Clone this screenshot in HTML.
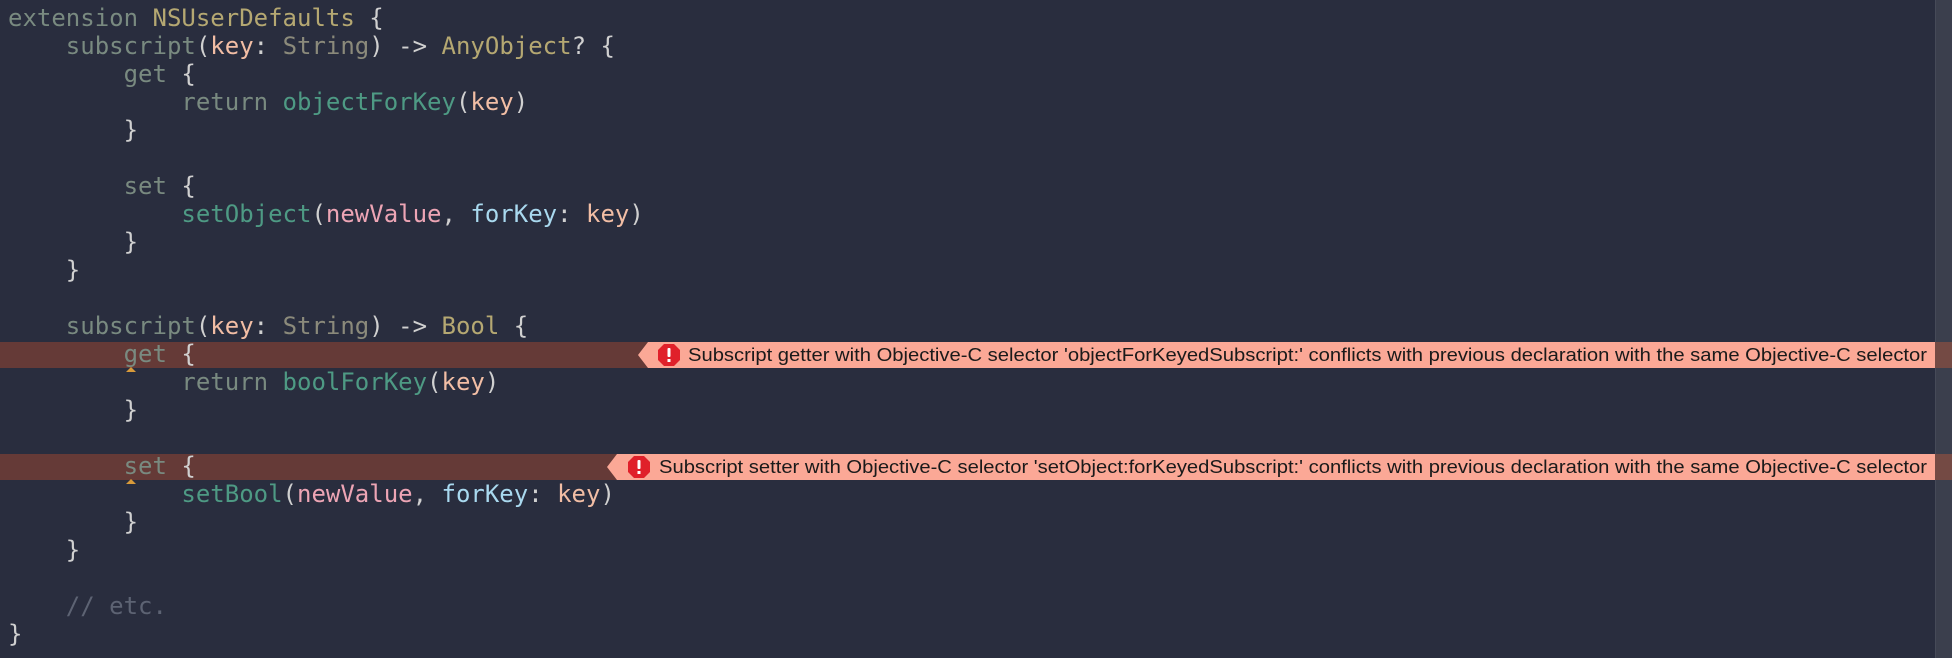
<!DOCTYPE html>
<html><head><meta charset="utf-8"><style>
html,body{margin:0;padding:0;width:1952px;height:658px;overflow:hidden;background:#292d3e;}
.code{position:absolute;left:8px;top:4px;margin:0;font-family:"DejaVu Sans Mono","Liberation Mono",monospace;font-size:24px;line-height:28px;color:#d0d0d0;white-space:pre;}
.kw{color:#798a80}.ty{color:#b5a872}.st{color:#8b8a7b}.pa{color:#f2bea5}.fn{color:#4e9a84}.lb{color:#a9d9ef}.nv{color:#eda5b5}.cm{color:#5d6373}
.band{position:absolute;left:0;width:1935px;height:26px;background:#653a37;}
.sb{position:absolute;left:1935px;top:0;width:17px;height:658px;background:#3b3f4d;border-left:1px solid #464a58;box-sizing:border-box;}
.strip{position:absolute;left:1935px;width:17px;height:26px;background:#744a44;}
.caret{position:absolute;width:0;height:0;border-left:5px solid transparent;border-right:5px solid transparent;border-bottom:5px solid #d89a3a;}
svg{position:absolute;left:0;}
</style></head><body>
<div class="sb"></div>
<div class="band" style="top:342px"></div>
<div class="band" style="top:454px"></div>
<div class="strip" style="top:342px"></div>
<div class="strip" style="top:454px"></div>
<svg width="1935" height="26" style="top:342px">
<polygon points="638,13 648,0 1935,0 1935,26 648,26" fill="#fba896"/>
<polygon points="664,2 674,2 680,8 680,18 674,24 664,24 658,18 658,8" fill="#e0202a"/>
<rect x="667.5" y="6" width="3" height="9" rx="1" fill="#fff"/><rect x="667.5" y="17" width="3" height="3" fill="#fff"/>
<text x="688" y="19" textLength="1239" lengthAdjust="spacingAndGlyphs" font-family="Liberation Sans, sans-serif" font-size="18" fill="#1a1a1a">Subscript getter with Objective-C selector 'objectForKeyedSubscript:' conflicts with previous declaration with the same Objective-C selector</text>
</svg>
<svg width="1935" height="26" style="top:454px">
<polygon points="607,13 617,0 1935,0 1935,26 617,26" fill="#fba896"/>
<polygon points="634,2 644,2 650,8 650,18 644,24 634,24 628,18 628,8" fill="#e0202a"/>
<rect x="637.5" y="6" width="3" height="9" rx="1" fill="#fff"/><rect x="637.5" y="17" width="3" height="3" fill="#fff"/>
<text x="659" y="19" textLength="1268" lengthAdjust="spacingAndGlyphs" font-family="Liberation Sans, sans-serif" font-size="18" fill="#1a1a1a">Subscript setter with Objective-C selector 'setObject:forKeyedSubscript:' conflicts with previous declaration with the same Objective-C selector</text>
</svg>
<div class="caret" style="left:126px;top:367px"></div>
<div class="caret" style="left:126px;top:479px"></div>
<pre class="code"><span class="kw">extension</span> <span class="ty">NSUserDefaults</span> {
    <span class="kw">subscript</span>(<span class="pa">key</span>: <span class="st">String</span>) -&gt; <span class="ty">AnyObject</span>? {
        <span class="kw">get</span> {
            <span class="kw">return</span> <span class="fn">objectForKey</span>(<span class="pa">key</span>)
        }

        <span class="kw">set</span> {
            <span class="fn">setObject</span>(<span class="nv">newValue</span>, <span class="lb">forKey</span>: <span class="pa">key</span>)
        }
    }

    <span class="kw">subscript</span>(<span class="pa">key</span>: <span class="st">String</span>) -&gt; <span class="ty">Bool</span> {
        <span class="kw">get</span> {
            <span class="kw">return</span> <span class="fn">boolForKey</span>(<span class="pa">key</span>)
        }

        <span class="kw">set</span> {
            <span class="fn">setBool</span>(<span class="nv">newValue</span>, <span class="lb">forKey</span>: <span class="pa">key</span>)
        }
    }

    <span class="cm">// etc.</span>
}</pre>
</body></html>
